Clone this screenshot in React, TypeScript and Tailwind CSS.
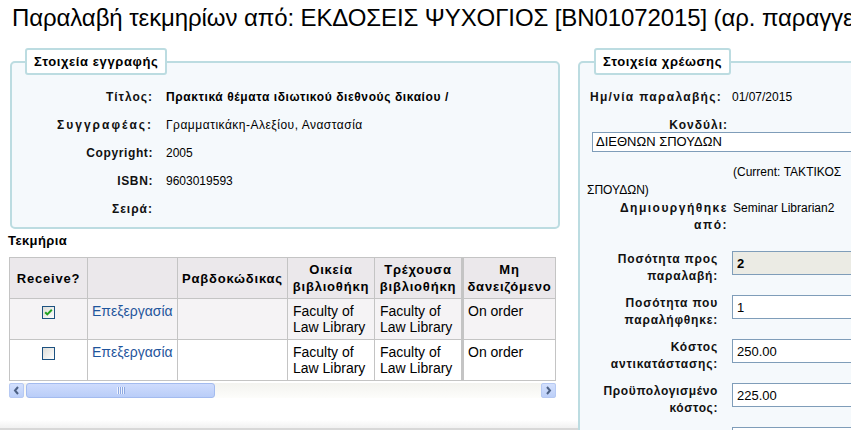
import React from 'react';

const items = [
  { checked: true },
  { checked: false },
];

function CheckBox({ checked }: { checked: boolean }) {
  return (
    <svg width="13" height="13" viewBox="0 0 13 13" className="inline-block">
      <defs>
        <linearGradient id={checked ? 'cbg1' : 'cbg2'} x1="0" y1="0" x2="1" y2="1">
          <stop offset="0" stopColor="#dcdcd7" />
          <stop offset="1" stopColor="#ffffff" />
        </linearGradient>
      </defs>
      <rect x="0.5" y="0.5" width="12" height="12" fill={`url(#${checked ? 'cbg1' : 'cbg2'})`} stroke="#1c5180" />
      {checked && <path d="M3.2 6.2 L5.3 8.4 L9.8 3.8" fill="none" stroke="#21a121" strokeWidth="2" />}
    </svg>
  );
}

function Arrow({ dir }: { dir: 'left' | 'right' }) {
  return (
    <svg width="7" height="9" viewBox="0 0 7 9">
      {dir === 'left' ? (
        <path d="M5 1 L2 4.5 L5 8" fill="none" stroke="#4d6185" strokeWidth="2" />
      ) : (
        <path d="M2 1 L5 4.5 L2 8" fill="none" stroke="#4d6185" strokeWidth="2" />
      )}
    </svg>
  );
}

function ScrollBar() {
  return (
    <div className="flex h-[15px] w-[547px] bg-gradient-to-b from-[#f3f3ef] to-[#fdfdfb]">
      <div className="flex h-[15px] w-[15px] items-center justify-center rounded-[2px] border border-[#b6c9f3] bg-gradient-to-b from-[#d3e0fd] to-[#bccff8]">
        <Arrow dir="left" />
      </div>
      <div className="ml-[2px] flex h-[15px] w-[189px] items-center justify-center rounded-[3px] border border-[#a3bbef] bg-gradient-to-b from-[#cfdcfd] to-[#b9cdf8]">
        <svg width="8" height="7" viewBox="0 0 8 7">
          <path d="M0.5 0 V7 M2.5 0 V7 M4.5 0 V7 M6.5 0 V7" stroke="#eef3ff" strokeWidth="1" />
          <path d="M1.5 0 V7 M3.5 0 V7 M5.5 0 V7 M7.5 0 V7" stroke="#8ea9e2" strokeWidth="1" />
        </svg>
      </div>
      <div className="flex-1" />
      <div className="flex h-[15px] w-[15px] items-center justify-center rounded-[2px] border border-[#b6c9f3] bg-gradient-to-b from-[#d3e0fd] to-[#bccff8]">
        <Arrow dir="right" />
      </div>
    </div>
  );
}

export default function App() {
  const rowLabel = 'text-right text-[12px] font-bold text-[#111]';
  const inputCls =
    'h-[24px] w-[200px] shrink-0 border border-[#7f9db9] px-[4px] text-[13px] text-black outline-none';

  return (
    <div className="relative h-[430px] w-[851px] overflow-hidden bg-white font-['Liberation_Sans',Arial,sans-serif] text-black">
      <h1 className="whitespace-nowrap pl-[12px] pt-[4px] text-[24px] font-normal leading-[28px] tracking-[-0.1px]">
        Παραλαβή τεκμηρίων από: ΕΚΔΟΣΕΙΣ ΨΥΧΟΓΙΟΣ [BN01072015] (αρ. παραγγελίας: 1)
      </h1>

      <div className="mt-[16px] flex items-start">
        {/* Left column: record details + items */}
        <div className="w-[578px] shrink-0 pl-[8px] pr-[18px]">
          <fieldset className="ml-[2px] w-[550px] rounded-[5px] border-2 border-[#bcdce1] bg-[#f5f9fc] pb-[4px] pt-[8px]">
            <legend className="ml-[13px] rounded-[3px] border-2 border-[#bcdce1] bg-white px-[7px] py-[3px] text-[13px] font-bold leading-[17px] tracking-[0.6px]">
              Στοιχεία εγγραφής
            </legend>
            <div className="grid grid-cols-[141px_1fr] gap-x-[13px] text-[12px]">
              <div className={`${rowLabel} leading-[28px] tracking-[1px]`}>Τίτλος:</div>
              <div className="font-bold leading-[28px] tracking-[0.6px]">Πρακτικά θέματα ιδιωτικού διεθνούς δικαίου /</div>
              <div className={`${rowLabel} leading-[28px] tracking-[2px]`}>Συγγραφέας:</div>
              <div className="leading-[28px] tracking-[0.5px]">Γραμματικάκη-Αλεξίου, Αναστασία</div>
              <div className={`${rowLabel} leading-[28px] tracking-[0.6px]`}>Copyright:</div>
              <div className="leading-[28px]">2005</div>
              <div className={`${rowLabel} leading-[28px] tracking-[0.6px]`}>ISBN:</div>
              <div className="leading-[28px]">9603019593</div>
              <div className={`${rowLabel} leading-[28px] tracking-[1px]`}>Σειρά:</div>
              <div className="leading-[28px]"></div>
            </div>
          </fieldset>

          <h2 className="mt-[4px] text-[13px] font-bold leading-[16px] tracking-[0.4px]">Τεκμήρια</h2>

          <div className="ml-[1px] mt-[8px] w-[547px] overflow-hidden">
            <table className="w-[700px] table-fixed border-collapse border border-[#c4c4c4] text-[14px]">
              <colgroup>
                <col className="w-[78px]" />
                <col className="w-[90px]" />
                <col className="w-[110px]" />
                <col className="w-[87px]" />
                <col className="w-[88px]" />
                <col className="w-[93px]" />
                <col className="w-[154px]" />
              </colgroup>
              <thead>
                <tr className="h-[41px] bg-[#ebe8eb] text-[13px] font-bold leading-[17px] tracking-[0.8px]">
                  <th className="border border-[#c4c4c4] px-[3px] text-center">Receive?</th>
                  <th className="border border-[#c4c4c4] px-[3px]"></th>
                  <th className="border border-[#c4c4c4] px-[3px] text-center">Ραβδοκώδικας</th>
                  <th className="border border-[#c4c4c4] px-[3px] text-center">Οικεία βιβλιοθήκη</th>
                  <th className="border border-[#c4c4c4] px-[3px] text-center">Τρέχουσα βιβλιοθήκη</th>
                  <th className="border border-[#c4c4c4] border-l-[3px] px-[3px] text-center">Μη δανειζόμενο</th>
                  <th className="border border-[#c4c4c4] px-[3px] text-center">Σημειώσεις</th>
                </tr>
              </thead>
              <tbody>
                {items.map((it, i) => (
                  <tr key={i} className={`h-[41px] align-top leading-[16px] ${i === 0 ? 'bg-[#f5f3f5]' : 'bg-white'}`}>
                    <td className="border border-[#c4c4c4] pt-[4px] text-center">
                      <CheckBox checked={it.checked} />
                    </td>
                    <td className="border border-[#c4c4c4] px-[4px] pt-[4px]">
                      <a className="text-[#1f559c]">Επεξεργασία</a>
                    </td>
                    <td className="border border-[#c4c4c4] px-[5px] pt-[4px]"></td>
                    <td className="border border-[#c4c4c4] px-[5px] pt-[4px]">Faculty of Law Library</td>
                    <td className="border border-[#c4c4c4] px-[5px] pt-[4px]">Faculty of Law Library</td>
                    <td className="border border-[#c4c4c4] border-l-[3px] px-[4px] pt-[4px]">On order</td>
                    <td className="border border-[#c4c4c4] px-[5px] pt-[4px]"></td>
                  </tr>
                ))}
              </tbody>
            </table>
          </div>
          <div className="ml-[1px] mt-[2px]">
            <ScrollBar />
          </div>

          <div className="-ml-[8px] -mr-[18px] mt-[22px] h-[10px] border-b-2 border-[#d8d8d8] bg-gradient-to-b from-white to-[#f1f1f1]" />
        </div>

        {/* Right column: billing details */}
        <fieldset className="w-[290px] shrink-0 rounded-[5px] border-2 border-[#bcdce1] bg-[#f5f9fc] pb-[20px] pl-[7px] pt-[8px]">
          <legend className="ml-[7px] rounded-[3px] border-2 border-[#bcdce1] bg-white px-[7px] py-[3px] text-[13px] font-bold leading-[17px] tracking-[0.6px]">
            Στοιχεία χρέωσης
          </legend>

          <div className="flex h-[28px] items-center text-[12px]">
            <div className={`${rowLabel} w-[135px] shrink-0 whitespace-nowrap tracking-[1.3px]`}>Ημ/νία παραλαβής:</div>
            <div className="ml-[10px]">01/07/2015</div>
          </div>

          <div className={`${rowLabel} mt-[7px] w-[141px] leading-[14px] tracking-[1px]`}>Κονδύλι:</div>
          <div className="ml-[5px] flex h-[20px] w-[300px] items-center border border-[#7f9db9] bg-white pl-[3px] text-[13px]">
            ΔΙΕΘΝΩΝ ΣΠΟΥΔΩΝ
          </div>
          <p className="mt-[11px] indent-[146px] text-[12px] leading-[18px]">
            (Current: ΤΑΚΤΙΚΟΣ
            <br />
            ΣΠΟΥΔΩΝ)
          </p>

          <div className="mt-[1px] flex items-start text-[12px] leading-[17px]">
            <div className={`${rowLabel} w-[141px] shrink-0 tracking-[1.5px]`}>
              Δημιουργήθηκε
              <br />
              από:
            </div>
            <div className="ml-[5px] whitespace-nowrap">Seminar Librarian2</div>
          </div>

          <div className="mt-[17px] flex items-start">
            <div className={`${rowLabel} w-[131px] shrink-0 leading-[17px] tracking-[0.8px]`}>
              Ποσότητα προς
              <br />
              παραλαβή:
            </div>
            <input readOnly value="2" className={`${inputCls} ml-[14px] bg-[#ebebe4] font-bold`} />
          </div>
          <div className="mt-[10px] flex items-start">
            <div className={`${rowLabel} w-[131px] shrink-0 leading-[17px] tracking-[0.8px]`}>
              Ποσότητα που
              <br />
              παραλήφθηκε:
            </div>
            <input readOnly value="1" className={`${inputCls} ml-[14px] bg-white`} />
          </div>
          <div className="mt-[10px] flex items-start">
            <div className={`${rowLabel} w-[131px] shrink-0 leading-[17px] tracking-[0.8px]`}>
              Κόστος
              <br />
              αντικατάστασης:
            </div>
            <input readOnly value="250.00" className={`${inputCls} ml-[14px] bg-white`} />
          </div>
          <div className="mt-[10px] flex items-start">
            <div className={`${rowLabel} w-[131px] shrink-0 leading-[17px] tracking-[0.6px]`}>
              Προϋπολογισμένο
              <br />
              κόστος:
            </div>
            <input readOnly value="225.00" className={`${inputCls} ml-[14px] bg-white`} />
          </div>
          <div className="mt-[10px] flex items-start">
            <div className="w-[131px] shrink-0" />
            <input readOnly value="" className={`${inputCls} ml-[14px] bg-white`} />
          </div>
        </fieldset>
      </div>
    </div>
  );
}
